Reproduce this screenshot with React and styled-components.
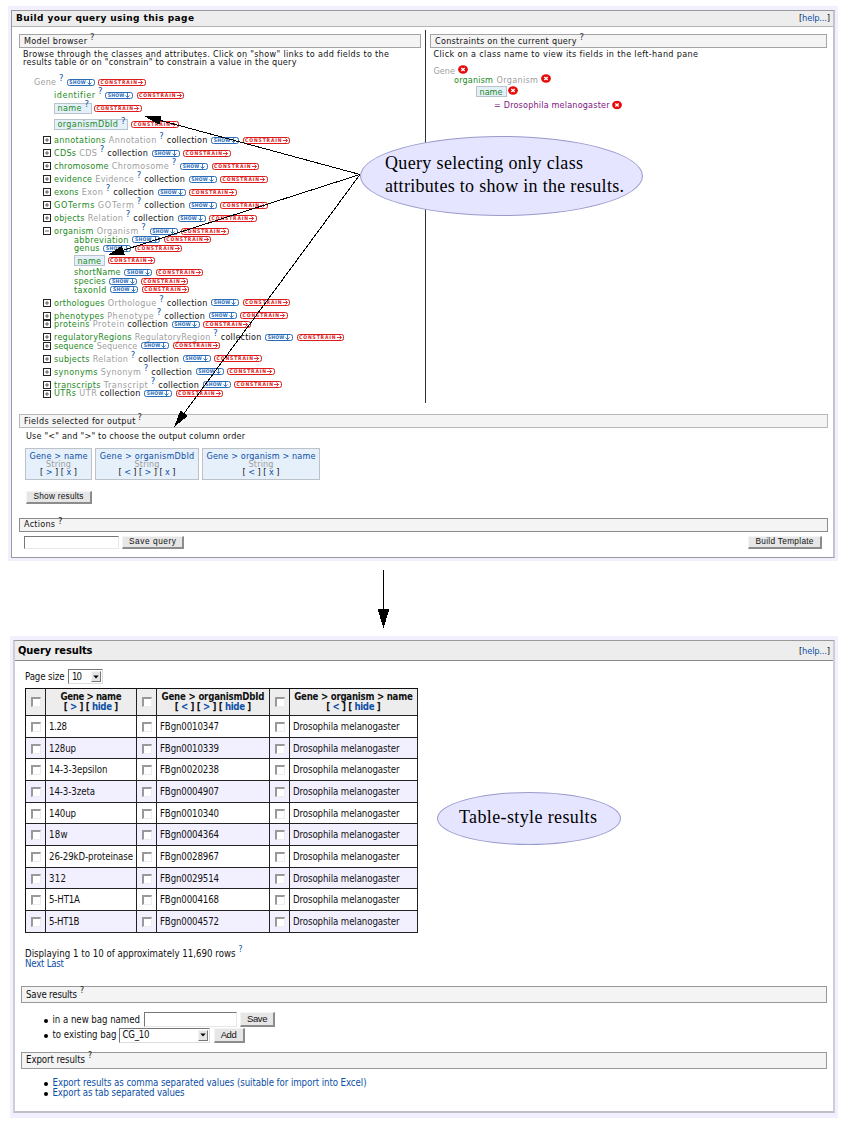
import React, { useLayoutEffect, useRef, useState } from "react";
import styled, { createGlobalStyle, css } from "styled-components";

const Global = createGlobalStyle`
  body { margin: 0; background: #fff; }
  * { box-sizing: border-box; }
`;

const BLUE = "#0d4fa5";
const GREEN = "#1d8a1d";
const GREY = "#a0a0a0";

/* ---------- text ---------- */

const FitBox = styled.span`
  display: inline-block;
  flex: none;
  white-space: pre;
  width: ${(p) => p.$w}px;
  color: ${(p) => p.$color || "inherit"};
`;

/* Tracks a run of text so that it fills the given width. */
function Fit({ w, color, children }) {
  const ref = useRef(null);
  const [spacing, setSpacing] = useState(null);
  useLayoutEffect(() => {
    const el = ref.current;
    const count = el.textContent.length;
    const natural = el.getBoundingClientRect().width;
    setSpacing((w - natural) / Math.max(1, count - 1));
  }, [w]);
  return (
    <FitBox $w={w} $color={color}>
      <span ref={ref} style={spacing === null ? undefined : { letterSpacing: `${spacing}px` }}>
        {children}
      </span>
    </FitBox>
  );
}

const Blue = styled.span`
  color: ${BLUE};
`;

const Help = styled.sup`
  flex: none;
  width: 4.5px;
  margin: 0 ${(p) => p.$after ?? 3}px 0 ${(p) => p.$before ?? 3}px;
  font-size: 8.5px;
  line-height: 8px;
  vertical-align: baseline;
  color: ${(p) => p.$color || BLUE};
  transform: translateY(-${(p) => p.$up ?? 4}px);
`;

const HelpMark = (props) => <Help {...props}>?</Help>;

/* ---------- frames ---------- */

const Page = styled.main`
  position: relative;
  width: 844px;
  height: 1126px;
  padding-top: 6px;
  background: #fff;
  color: #111;
  overflow: hidden;
`;

const Frame = styled.section`
  background: #f2efff;
  ${(p) =>
    p.$results
      ? css`
          margin: 75px 0 0 10px;
          width: 828px;
          height: 482px;
          padding: 4px 3px 5px 3px;
          font: 9.6px/10px "DejaVu Sans Condensed", "DejaVu Sans", sans-serif;
        `
      : css`
          margin: 0 0 0 8px;
          width: 830px;
          height: 555px;
          padding: 4px 3px 3px 3px;
          font: 8.1px/8.5px "DejaVu Sans", sans-serif;
        `}
`;

const Inner = styled.div`
  height: 100%;
  background: #fff;
  border: 1px solid #999;
  ${(p) =>
    p.$results
      ? "border-left: 2px solid #cfcdd8; border-right: 2px solid #cfcdd8; border-bottom: 2px solid #c0bfc8;"
      : "border-right: 2px solid #c4c2cc;"}
`;

const Header = styled.header`
  display: flex;
  align-items: center;
  justify-content: space-between;
  height: ${(p) => (p.$results ? 20 : 16)}px;
  padding: 0 3px 0 ${(p) => (p.$results ? 3 : 4)}px;
  background: #ededed;
  border-bottom: 1px solid ${(p) => (p.$results ? "#8a8a8a" : "#b4b4b4")};
  font-size: ${(p) => (p.$results ? 11 : 9)}px;
`;

const Title = styled.strong`
  color: #000;
`;

const HelpLink = styled.span`
  font-size: 9.3px;
  font-family: "DejaVu Sans Condensed", sans-serif;
`;

const Bar = styled.div`
  display: flex;
  align-items: center;
  width: ${(p) => p.$w}px;
  height: ${(p) => p.$h || 14}px;
  margin: ${(p) => p.$m || 0};
  padding-left: 4px;
  background: #f4f4f4;
  border: 1px solid ${(p) => p.$line || "#a4a4a4"};
`;

/* ---------- query builder ---------- */

const Columns = styled.div`
  display: flex;
  height: 373px;
  margin-top: 3px;
`;

const Browser = styled.div`
  width: 414px;
  padding: 4px 0 0 7px;
  border-right: 1px solid #333;
`;

const Constraints = styled.div`
  padding: 4px 0 0 4px;
`;

const Line = styled.div`
  display: flex;
  align-items: center;
  height: ${(p) => p.$h || 8.5}px;
  margin: ${(p) => p.$m || 0};
  ${(p) => p.$center && "justify-content: center;"}
`;

const TreeRow = styled.div`
  display: flex;
  align-items: flex-end;
  height: ${(p) => p.$h}px;
  padding-left: ${(p) => p.$indent}px;
  & > * {
    flex: none;
  }
`;

const Cells = styled.div`
  display: flex;
  align-items: center;
  height: 8.5px;
`;

const Selected = styled.span`
  display: flex;
  align-items: center;
  width: ${(p) => p.$w}px;
  height: 11px;
  padding-left: 2.5px;
  background: #e5f0fa;
  border: 1px solid #b9c3cc;
`;

const Gap = styled.span`
  width: ${(p) => p.$w}px;
  flex: none;
`;

const Badge = styled.span`
  display: flex;
  align-items: center;
  justify-content: center;
  gap: 1px;
  flex: none;
  width: ${(p) => (p.$show ? 28 : 47.5)}px;
  height: 7px;
  margin-right: 3.5px;
  border: 1px solid currentColor;
  border-radius: 2.5px;
  background: #fff;
  color: ${(p) => (p.$show ? "#2a6cb8" : "#dc1c1c")};
  font: bold 5px/5px "DejaVu Sans Condensed", "DejaVu Sans", sans-serif;
`;

const ShowBadge = () => (
  <Badge $show>
    <Fit w={16.5}>SHOW</Fit>
    <svg width="5" height="5" viewBox="0 0 5 5" fill="none" stroke="currentColor">
      <path d="M2.5 0V4.5M0.5 2.5L2.5 4.5L4.5 2.5" strokeWidth="0.9" />
    </svg>
  </Badge>
);

const ConstrainBadge = () => (
  <Badge>
    <Fit w={36.5}>CONSTRAIN</Fit>
    <svg width="5" height="5" viewBox="0 0 5 5" fill="none" stroke="currentColor">
      <path d="M0 2.5H4.5M2.5 0.5L4.5 2.5L2.5 4.5" strokeWidth="0.9" />
    </svg>
  </Badge>
);

const TogglerSvg = styled.svg`
  flex: none;
  margin-left: -11px;
  margin-right: 3px;
`;

const Toggler = ({ open }) => (
  <TogglerSvg width="8" height="8" viewBox="0 0 8 8">
    <rect x="0.5" y="0.5" width="7" height="7" fill="#fff" stroke="#222" />
    <path d={open ? "M2 4H6" : "M2 4H6M4 2V6"} stroke="#222" strokeWidth="0.7" />
  </TogglerSvg>
);

const RemoveSvg = styled.svg`
  flex: none;
  margin-left: ${(p) => p.$left}px;
  transform: translateY(-${(p) => p.$up}px);
`;

const RemoveIcon = ({ up = 0, left = 3 }) => (
  <RemoveSvg $up={up} $left={left} width="10" height="9" viewBox="0 0 10 9">
    <ellipse cx="5" cy="4.5" rx="4.9" ry="4.2" fill="#e60b0b" />
    <path d="M3.3 3L6.7 6M6.7 3L3.3 6" stroke="#fff" strokeWidth="1.5" />
  </RemoveSvg>
);

/* h: row height, n: name, w: name width, c: class, cw: class width, q: help, k: collection */
const tree = [
  { h: 15.6, n: "annotations", w: 51.5, c: "Annotation", cw: 47.5, q: 1, k: 1 },
  { h: 13, n: "CDSs", w: 22, c: "CDS", cw: 17.5, q: 1, k: 1 },
  { h: 13, n: "chromosome", w: 54.5, c: "Chromosome", cw: 57, q: 1 },
  { h: 13, n: "evidence", w: 38, c: "Evidence", cw: 38.5, q: 1, k: 1 },
  { h: 13, n: "exons", w: 24.5, c: "Exon", cw: 21, q: 1, k: 1 },
  { h: 13, n: "GOTerms", w: 40.5, c: "GOTerm", cw: 36, q: 1, k: 1 },
  { h: 13, n: "objects", w: 30.5, c: "Relation", cw: 35, q: 1, k: 1 },
  { h: 13, n: "organism", w: 39.5, c: "Organism", cw: 41.5, q: 1, open: 1 },
  { h: 8.7, n: "abbreviation", w: 54.5, leaf: 1 },
  { h: 8.6, n: "genus", w: 25.5, leaf: 1 },
  { h: 12.4, n: "name", w: 23.5, leaf: 1, box: 30.5 },
  { h: 11.6, n: "shortName", w: 46.5, leaf: 1 },
  { h: 8.6, n: "species", w: 31.5, leaf: 1 },
  { h: 8.7, n: "taxonId", w: 32.5, leaf: 1 },
  { h: 13, n: "orthologues", w: 50.5, c: "Orthologue", cw: 48.5, q: 1, k: 1 },
  { h: 13, n: "phenotypes", w: 50, c: "Phenotype", cw: 46.5, q: 1, k: 1 },
  { h: 8.6, n: "proteins", w: 35.5, c: "Protein", cw: 31.5, k: 1 },
  { h: 13, n: "regulatoryRegions", w: 77.5, c: "RegulatoryRegion", cw: 75.5, q: 1, k: 1 },
  { h: 8.6, n: "sequence", w: 39.5, c: "Sequence", cw: 40.5 },
  { h: 13, n: "subjects", w: 35.5, c: "Relation", cw: 35, q: 1, k: 1 },
  { h: 13, n: "synonyms", w: 43.5, c: "Synonym", cw: 40, q: 1, k: 1 },
  { h: 13, n: "transcripts", w: 46.5, c: "Transcript", cw: 44, q: 1, k: 1 },
  { h: 8.7, n: "UTRs", w: 22, c: "UTR", cw: 17.5, k: 1 },
];

function TreeList() {
  return tree.map((item) => (
    <TreeRow key={item.n} $h={item.h} $indent={item.leaf ? 55 : 35}>
      <Cells>
        {!item.leaf && <Toggler open={item.open} />}
        {item.box ? (
          <Selected $w={item.box}><Fit w={item.w} color={GREEN}>{item.n}</Fit></Selected>
        ) : (
          <Fit w={item.w} color={GREEN}>{item.n}</Fit>
        )}
        {item.c && <Gap $w={3.3} />}
        {item.c && <Fit w={item.cw} color={GREY}>{item.c}</Fit>}
        {item.q && <HelpMark $after={0} />}
        {item.k && <Gap $w={3} />}
        {item.k && <Fit w={40.5}>collection</Fit>}
        <Gap $w={item.box ? 3 : 3.8} />
        {!item.box && <ShowBadge />}
        <ConstrainBadge />
      </Cells>
    </TreeRow>
  ));
}

/* ---------- output fields ---------- */

const Cards = styled.div`
  display: flex;
  gap: 3px;
  margin: 7px 0 0 13px;
`;

const Card = styled.div`
  width: ${(p) => p.$w}px;
  height: 32px;
  padding-top: 3px;
  background: #e5f0fb;
  border: 1px solid #bcc2c8;
`;

const Button = styled.button`
  display: flex;
  align-items: center;
  justify-content: center;
  flex: none;
  width: ${(p) => p.$w}px;
  height: ${(p) => p.$h || 13}px;
  margin: ${(p) => p.$m || 0};
  padding: 0;
  background: #e6e6e6;
  border: 1px solid #f4f4f4;
  border-right: 2px solid #8c8c8c;
  border-bottom: 2px solid #8c8c8c;
  color: #111;
  font: ${(p) => (p.$h ? "9.5px/10px" : "8.3px/9px")} "Liberation Sans", Arial, sans-serif;
`;

const Input = styled.input`
  flex: none;
  width: ${(p) => p.$w}px;
  height: ${(p) => p.$h || 13}px;
  padding: 0;
  background: #fff;
  border: 1px solid #e8e8e8;
  border-top: 1px solid #777;
  border-left: 1px solid #777;
  outline: none;
`;

const Spacer = styled.span`
  flex: 1;
`;

/* ---------- results ---------- */

const SelectBox = styled.span`
  display: flex;
  align-items: center;
  justify-content: space-between;
  width: ${(p) => p.$w}px;
  height: 15px;
  padding: 0 1px 0 3px;
  background: #fff;
  border: 1px solid #ddd;
  border-top-color: #777;
  border-left-color: #777;
`;

const DropButton = styled.span`
  display: flex;
  align-items: center;
  justify-content: center;
  width: 10px;
  height: 11px;
  background: #e4e4e4;
  border: 1px solid #f4f4f4;
  border-right-color: #777;
  border-bottom-color: #777;
`;

const Select = ({ w, children }) => (
  <SelectBox $w={w}>
    {children}
    <DropButton>
      <svg width="6" height="4" viewBox="0 0 6 4">
        <path d="M0.3 0.5H5.7L3 3.5Z" fill="#000" />
      </svg>
    </DropButton>
  </SelectBox>
);

const Table = styled.div`
  display: grid;
  grid-template-columns: 20px 91px 20px 113px 20px 128px;
  grid-template-rows: 27px repeat(10, 21.68px);
  width: 393px;
  margin: 4px 0 0 10px;
  border-top: 1px solid #111;
  border-left: 1px solid #111;
`;

const Cell = styled.div`
  display: flex;
  flex-direction: ${(p) => (p.$head ? "column" : "row")};
  align-items: center;
  justify-content: ${(p) => (p.$check || p.$head ? "center" : "flex-start")};
  padding-left: ${(p) => (p.$check || p.$head ? 0 : 3)}px;
  padding-top: ${(p) => (p.$head ? 0 : 1)}px;
  border-right: 1px solid #222;
  border-bottom: 1px solid #222;
  background: ${(p) => (p.$head ? "#ededed" : p.$odd ? "#f2efff" : "#fff")};
  font-weight: ${(p) => (p.$head ? "bold" : "normal")};
`;

const Check = styled.span`
  width: 10px;
  height: 10px;
  background: #fff;
  border: 1px solid #ececec;
  border-top: 2px solid #999;
  border-left: 2px solid #999;
`;

const rows = [
  ["1.28", 18, "FBgn0010347"],
  ["128up", 27, "FBgn0010339"],
  ["14-3-3epsilon", 58.5, "FBgn0020238"],
  ["14-3-3zeta", 46, "FBgn0004907"],
  ["140up", 27, "FBgn0010340"],
  ["18w", 18.5, "FBgn0004364"],
  ["26-29kD-proteinase", 84, "FBgn0028967"],
  ["312", 17, "FBgn0029514"],
  ["5-HT1A", 31, "FBgn0004168"],
  ["5-HT1B", 30.5, "FBgn0004572"],
];

const Bullet = styled.span`
  flex: none;
  width: 4px;
  height: 4px;
  margin: 2px 4.5px 0 0;
  border-radius: 50%;
  background: #000;
`;

/* ---------- annotations ---------- */

const Callout = styled.div`
  position: absolute;
  left: ${(p) => p.$x}px;
  top: ${(p) => p.$y}px;
  width: ${(p) => p.$w}px;
  height: ${(p) => p.$h}px;
  padding: ${(p) => p.$pad};
  border: 1px solid #9a9acb;
  border-radius: 50%;
  background: #e5e5ff;
  color: #000;
  font: 18px/23px "Liberation Serif", "Times New Roman", serif;
  white-space: nowrap;
`;

const Arrows = styled.svg`
  position: absolute;
  left: 0;
  top: 0;
  pointer-events: none;
`;

function Arrow({ from, to, length = 17, half = 4.6 }) {
  const [x1, y1] = from;
  const [x2, y2] = to;
  const d = Math.hypot(x2 - x1, y2 - y1);
  const ux = (x2 - x1) / d;
  const uy = (y2 - y1) / d;
  const bx = x2 - ux * length;
  const by = y2 - uy * length;
  return (
    <g>
      <path d={`M${x1} ${y1}L${bx} ${by}`} stroke="#000" strokeWidth="1" />
      <path
        d={`M${x2} ${y2}L${bx - uy * half} ${by + ux * half}L${bx + uy * half} ${by - ux * half}Z`}
        fill="#000"
      />
    </g>
  );
}

/* ---------- page ---------- */

function QueryBuilder() {
  return (
    <Frame>
      <Inner>
        <Header>
          <Title><Fit w={178}>Build your query using this page</Fit></Title>
          <HelpLink><Fit w={31}>[<Blue>help...</Blue>]</Fit></HelpLink>
        </Header>
        <Columns>
          <Browser>
            <Bar $w={402}>
              <Fit w={63}>Model browser</Fit>
              <HelpMark $color="#333" />
            </Bar>
            <Line $m="1.5px 0 0 4px"><Fit w={366}>Browse through the classes and attributes. Click on "show" links to add fields to the</Fit></Line>
            <Line $m="0 0 0 4px"><Fit w={273.5}>results table or on "constrain" to constrain a value in the query</Fit></Line>
            <TreeRow $h={20} $indent={15}>
              <Cells>
                <Fit w={22} color={GREY}>Gene</Fit>
                <HelpMark />
                <ShowBadge />
                <ConstrainBadge />
              </Cells>
            </TreeRow>
            <TreeRow $h={13} $indent={35}>
              <Cells>
                <Fit w={41} color={GREEN}>identifier</Fit>
                <HelpMark $after={2.5} />
                <ShowBadge />
                <ConstrainBadge />
              </Cells>
            </TreeRow>
            <TreeRow $h={13.2} $indent={35}>
              <Cells>
                <Selected $w={37.5}><Fit w={24} color={GREEN}>name</Fit><HelpMark /></Selected>
                <Gap $w={2.5} />
                <ConstrainBadge />
              </Cells>
            </TreeRow>
            <TreeRow $h={16.2} $indent={35}>
              <Cells>
                <Selected $w={74}><Fit w={60.5} color={GREEN}>organismDbId</Fit><HelpMark /></Selected>
                <Gap $w={3} />
                <ConstrainBadge />
              </Cells>
            </TreeRow>
            <TreeList />
          </Browser>
          <Constraints>
            <Bar $w={397}>
              <Fit w={141.5}>Constraints on the current query</Fit>
              <HelpMark $color="#333" />
            </Bar>
            <Line $m="1.5px 0 0 3.5px"><Fit w={264.5}>Click on a class name to view its fields in the left-hand pane</Fit></Line>
            <Line $m="8.7px 0 0 3.5px"><Fit w={21.5} color={GREY}>Gene</Fit><RemoveIcon up={1} /></Line>
            <Line $h={9.3} $m="0 0 0 24px">
              <Fit w={39} color={GREEN}>organism</Fit><Gap $w={3.5} />
              <Fit w={41.5} color={GREY}>Organism</Fit><RemoveIcon up={1} />
            </Line>
            <Line $h={11} $m="2px 0 0 46px">
              <Selected $w={30.5}><Fit w={23} color={GREEN}>name</Fit></Selected><RemoveIcon up={1} left={1.5} />
            </Line>
            <Line $m="3.5px 0 0 64px">
              <Fit w={115.5} color="#811481">= Drosophila melanogaster</Fit><RemoveIcon up={0.5} left={2.5} />
            </Line>
          </Constraints>
        </Columns>
        <Bar $w={809} $m="11px 0 0 7px" $line="#b8b8b8">
          <Fit w={111.5}>Fields selected for output</Fit>
          <HelpMark $before={2} $color="#333" />
        </Bar>
        <Line $m="4px 0 0 14px"><Fit w={219}>Use "&lt;" and "&gt;" to choose the output column order</Fit></Line>
        <Cards>
          <Card $w={67}>
            <Line $center><Fit w={58} color={BLUE}>Gene &gt; name</Fit></Line>
            <Line $center $h={7.8}><Fit w={25} color={GREY}>String</Fit></Line>
            <Line $center><Fit w={37}>[ <Blue>&gt;</Blue> ] [ <Blue>x</Blue> ]</Fit></Line>
          </Card>
          <Card $w={104}>
            <Line $center><Fit w={94.5} color={BLUE}>Gene &gt; organismDbId</Fit></Line>
            <Line $center $h={7.8}><Fit w={25} color={GREY}>String</Fit></Line>
            <Line $center><Fit w={57}>[ <Blue>&lt;</Blue> ] [ <Blue>&gt;</Blue> ] [ <Blue>x</Blue> ]</Fit></Line>
          </Card>
          <Card $w={118}>
            <Line $center><Fit w={109} color={BLUE}>Gene &gt; organism &gt; name</Fit></Line>
            <Line $center $h={7.8}><Fit w={25} color={GREY}>String</Fit></Line>
            <Line $center><Fit w={37}>[ <Blue>&lt;</Blue> ] [ <Blue>x</Blue> ]</Fit></Line>
          </Card>
        </Cards>
        <Button $w={66} $m="11px 0 0 14px"><Fit w={50}>Show results</Fit></Button>
        <Bar $w={809} $m="14px 0 0 7px" $line="#8c8c8c">
          <Fit w={31}>Actions</Fit>
          <HelpMark $color="#222" />
        </Bar>
        <Line $h={13} $m="4px 11px 0 12px">
          <Input $w={95} aria-label="Query name" />
          <Button $w={62} $m="0 0 0 3px"><Fit w={47}>Save query</Fit></Button>
          <Spacer />
          <Button $w={74}><Fit w={58}>Build Template</Fit></Button>
        </Line>
      </Inner>
    </Frame>
  );
}

function QueryResults() {
  return (
    <Frame $results>
      <Inner $results>
        <Header $results>
          <Title><Fit w={74.5}>Query results</Fit></Title>
          <HelpLink><Fit w={31}>[<Blue>help...</Blue>]</Fit></HelpLink>
        </Header>
        <Line $h={15} $m="8px 0 0 10px">
          <Fit w={39.5}>Page size</Fit>
          <Gap $w={3.5} />
          <Select w={35}><Fit w={10}>10</Fit></Select>
        </Line>
        <Table>
          <Cell $head><Check /></Cell>
          <Cell $head>
            <Fit w={61}>Gene &gt; name</Fit>
            <Fit w={54.5}>[ <Blue>&gt;</Blue> ] [ <Blue>hide</Blue> ]</Fit>
          </Cell>
          <Cell $head><Check /></Cell>
          <Cell $head>
            <Fit w={103}>Gene &gt; organismDbId</Fit>
            <Fit w={76.5}>[ <Blue>&lt;</Blue> ] [ <Blue>&gt;</Blue> ] [ <Blue>hide</Blue> ]</Fit>
          </Cell>
          <Cell $head><Check /></Cell>
          <Cell $head>
            <Fit w={118.5}>Gene &gt; organism &gt; name</Fit>
            <Fit w={54.5}>[ <Blue>&lt;</Blue> ] [ <Blue>hide</Blue> ]</Fit>
          </Cell>
          {rows.map(([name, w, id], i) => (
            <React.Fragment key={id}>
              <Cell $check $odd={i % 2}><Check /></Cell>
              <Cell $odd={i % 2}><Fit w={w}>{name}</Fit></Cell>
              <Cell $check $odd={i % 2}><Check /></Cell>
              <Cell $odd={i % 2}><Fit w={59}>{id}</Fit></Cell>
              <Cell $check $odd={i % 2}><Check /></Cell>
              <Cell $odd={i % 2}><Fit w={106.5}>Drosophila melanogaster</Fit></Cell>
            </React.Fragment>
          ))}
        </Table>
        <Line $h={10} $m="16px 0 0 10px">
          <Fit w={210.5}>Displaying 1 to 10 of approximately 11,690 rows</Fit>
          <HelpMark $up={5} />
        </Line>
        <Line $h={10} $m="0 0 0 10px"><Fit w={39} color={BLUE}>Next Last</Fit></Line>
        <Bar $w={806} $h={17} $m="17.5px 0 0 6px" $line="#999">
          <Fit w={51}>Save results</Fit>
          <HelpMark $color="#111" $up={5} />
        </Bar>
        <Line $h={15} $m="9px 0 0 29px">
          <Bullet />
          <Fit w={87.5}>in a new bag named</Fit>
          <Gap $w={4} />
          <Input $w={93} $h={15} aria-label="Bag name" />
          <Button $w={35} $h={15} $m="0 0 0 3px"><Fit w={20.5}>Save</Fit></Button>
        </Line>
        <Line $h={15} $m="0.5px 0 0 29px">
          <Bullet />
          <Fit w={64}>to existing bag</Fit>
          <Gap $w={2} />
          <Select w={91}><Fit w={27}>CG_10</Fit></Select>
          <Button $w={31} $h={15} $m="0 0 0 4px"><Fit w={16}>Add</Fit></Button>
        </Line>
        <Bar $w={806} $h={17} $m="9px 0 0 6px" $line="#999">
          <Fit w={59}>Export results</Fit>
          <HelpMark $color="#111" $up={5} />
        </Bar>
        <Line $h={10} $m="9px 0 0 29px">
          <Bullet />
          <Fit w={314} color={BLUE}>Export results as comma separated values (suitable for import into Excel)</Fit>
        </Line>
        <Line $h={10} $m="0 0 0 29px">
          <Bullet />
          <Fit w={132} color={BLUE}>Export as tab separated values</Fit>
        </Line>
      </Inner>
    </Frame>
  );
}

export default function App() {
  return (
    <Page>
      <Global />
      <QueryBuilder />
      <QueryResults />
      <Callout $x={359.5} $y={136} $w={283} $h={80} $pad="15px 0 0 24.5px">
        <div><Fit w={198}>Query selecting only class</Fit></div>
        <div><Fit w={239}>attributes to show in the results.</Fit></div>
      </Callout>
      <Callout $x={437} $y={792} $w={184} $h={53} $pad="13px 0 0 21px">
        <Fit w={138}>Table-style results</Fit>
      </Callout>
      <Arrows width="844" height="1126" viewBox="0 0 844 1126" shapeRendering="crispEdges">
        <Arrow from={[360, 174.5]} to={[144, 116]} />
        <Arrow from={[360, 174.5]} to={[107, 255.5]} />
        <Arrow from={[360, 174.5]} to={[174, 427]} />
        <Arrow from={[383.5, 570]} to={[383.5, 628]} length={19} half={6} />
      </Arrows>
    </Page>
  );
}
